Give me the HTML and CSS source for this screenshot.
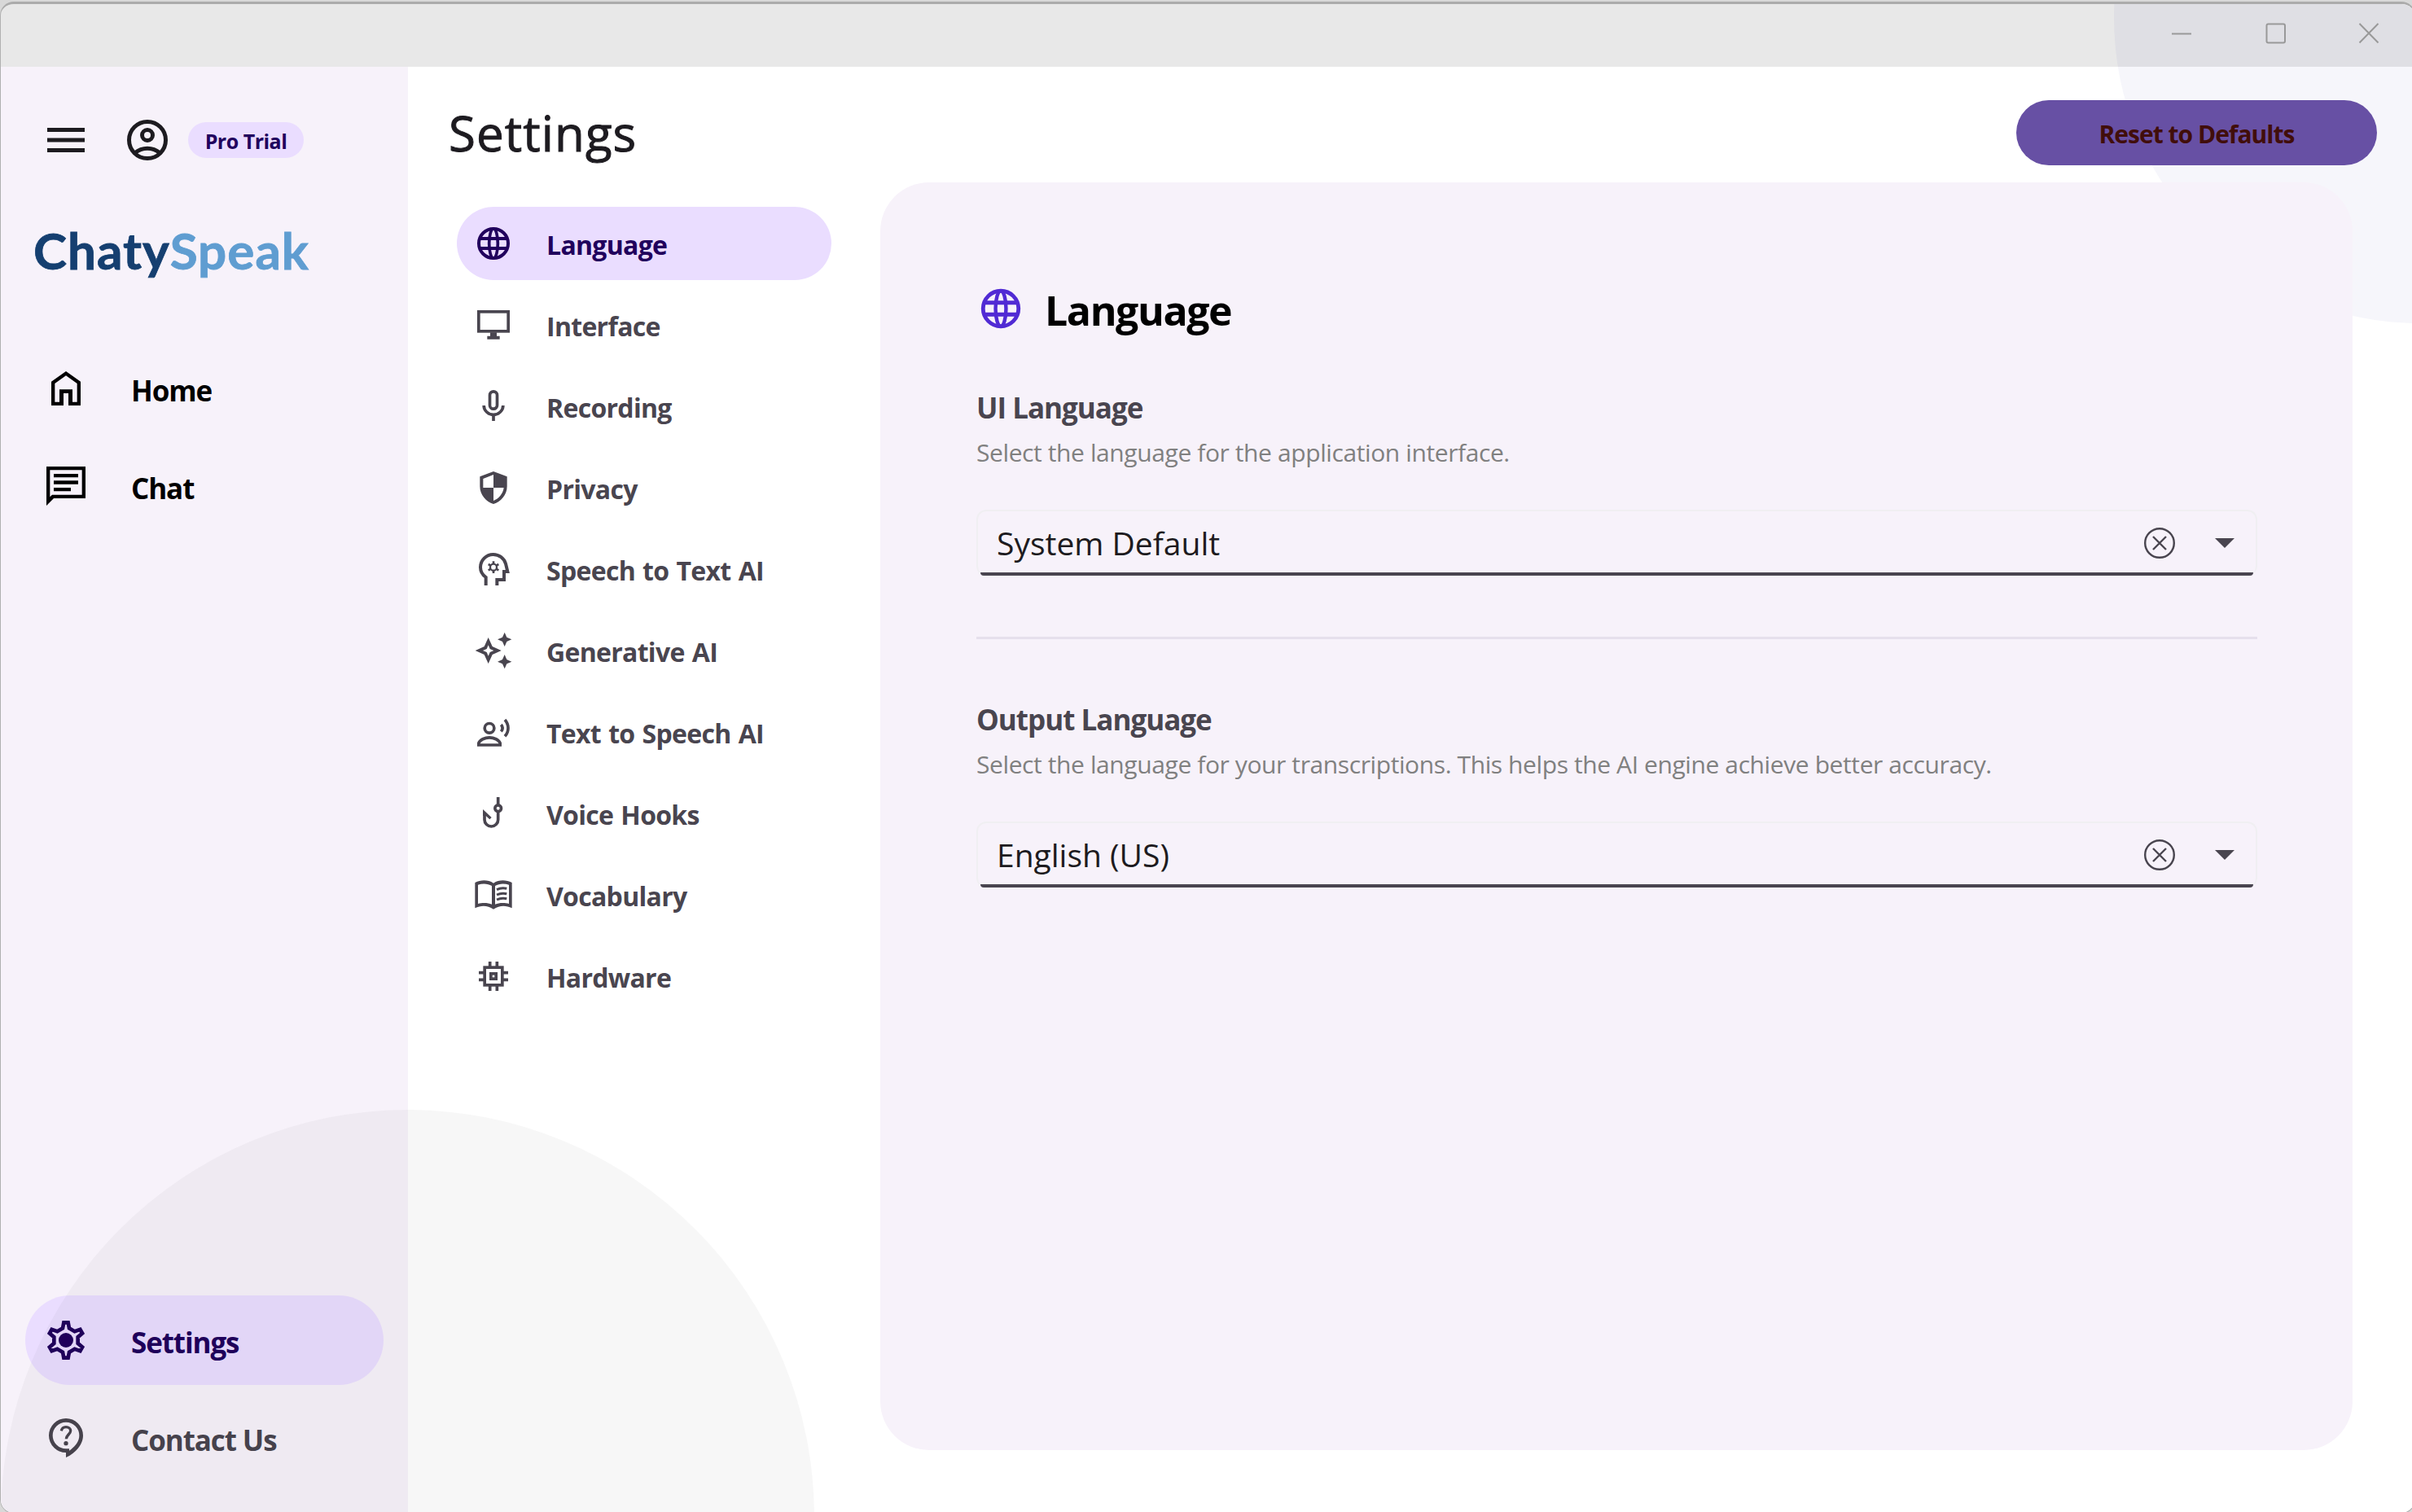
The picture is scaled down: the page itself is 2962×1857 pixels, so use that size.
FILE: index.html
```html
<!DOCTYPE html>
<html lang="en">
<head>
  <meta charset="UTF-8" />
  <title>ChatySpeak - Settings</title>
  <link rel="stylesheet" href="styles.css">
</head>
<body>
  <div class="window">
    <div class="circle-top"></div>

    <div class="titlebar">
      <svg class="win-btn" viewBox="0 0 26 26"><path d="M1 13.5H25" /></svg>
      <svg class="win-btn" viewBox="0 0 26 26"><rect x="2.5" y="1.5" width="22.5" height="23" rx="2" /></svg>
      <svg class="win-btn" viewBox="0 0 26 26"><path d="M1.5 1L24.5 24.5M24.5 1L1.5 24.5" /></svg>
    </div>

    <div class="layout">
      <aside class="sidebar">
        <div class="account">
          <svg class="menu-icon" viewBox="0 0 60 60"><path d="M7 15H53V20H7ZM7 27.5H53V32.5H7ZM7 40H53V45H7Z" /></svg>
          <svg class="user-icon" viewBox="0 0 150 150">
            <circle cx="75" cy="75" r="67.5" />
            <circle cx="75" cy="57" r="19.5" />
            <path d="M30 122C55 100 95 100 120 122" />
          </svg>
          <span class="plan">Pro Trial</span>
        </div>

        <div class="logo">Chaty<span>Speak</span></div>

        <nav class="side-nav">
          <a class="side-item">
            <svg class="icon" viewBox="-72 -72 144 144"><path fill-rule="evenodd" d="M-54 63V-25L0 -63L54 -25V63H9V18H-9V63ZM-41 50H-24V4H24V50H41V-18L0 -47L-41 -18Z" /></svg>
            <span>Home</span>
          </a>
          <a class="side-item">
            <svg class="icon" viewBox="0 0 144 144"><path fill-rule="evenodd" d="M0 0H144V117H27L0 144ZM13 13V112L21 104H131V13ZM27 27H117V40H27ZM27 52H117V65H27ZM27 78H90V91H27Z" /></svg>
            <span>Chat</span>
          </a>
        </nav>

        <nav class="side-nav bottom">
          <a class="side-item active">
            <svg class="icon" viewBox="-72 -72 144 144">
              <path class="line" stroke-width="14" d="M-8 -65H8L12 -44L32 -32.4L52.3 -39.4L60.3 -25.6L44 -11.6V11.6L60.3 25.6L52.3 39.4L32 32.4L12 44L8 65H-8L-12 44L-32 32.4L-52.3 39.4L-60.3 25.6L-44 11.6V-11.6L-60.3 -25.6L-52.3 -39.4L-32 -32.4L-12 -44Z" />
              <circle r="27" />
            </svg>
            <span>Settings</span>
          </a>
          <a class="side-item muted">
            <svg class="icon" viewBox="-9 0 144 144">
              <path fill-rule="evenodd" d="M63 0A63 63 0 0 0 63 126V144C100 128 126 95 126 63A63 63 0 0 0 63 0ZM63 14A49 49 0 0 1 112 63C112 87 95 105 75 119V112H63A49 49 0 0 1 63 14Z" />
              <path class="line" stroke-width="10" d="M46 46C48 36 54 32 63 32C73 32 80 38 80 46C80 58 64 61 64 76" />
              <circle cx="63" cy="92" r="8" />
            </svg>
            <span>Contact Us</span>
          </a>
        </nav>
      </aside>

      <main class="main">
        <header class="header">
          <h1>Settings</h1>
          <button class="reset">Reset to Defaults</button>
        </header>

        <div class="content">
          <nav class="tabs">
            <a class="tab active">
              <svg class="icon" viewBox="-72 -72 144 144">
                <g class="line" stroke-width="12"><circle r="54" /><ellipse rx="16" ry="54" stroke-width="11" /><path d="M-53 -18H53M-53 18H53" /></g>
              </svg>
              <span>Language</span>
            </a>
            <a class="tab">
              <svg class="icon" viewBox="-72 -72 144 144">
                <rect class="line" stroke-width="11" x="-54.5" y="-48.5" width="109" height="72" />
                <path d="M-12 28H12V41H23V53H-23V41H-12Z" />
              </svg>
              <span>Interface</span>
            </a>
            <a class="tab">
              <svg class="icon" viewBox="-72 -72 144 144">
                <g class="line" stroke-width="11"><rect x="-13.5" y="-54.5" width="27" height="64" rx="13.5" /><path d="M-35.5 -3A35.5 34 0 0 0 35.5 -3" /><path d="M0 32V54" /></g>
              </svg>
              <span>Recording</span>
            </a>
            <a class="tab">
              <svg class="icon" viewBox="-72 -72 144 144">
                <path fill-rule="evenodd" d="M0 -60L50 -41V-5C50 27 27 52 0 60C-27 52 -50 27 -50 -5V-41ZM0 -48V0H-38V-33ZM0 0H38C35 22 20 40 0 48Z" />
              </svg>
              <span>Privacy</span>
            </a>
            <a class="tab">
              <svg class="icon" viewBox="-72 -72 144 144">
                <path class="line" stroke-width="12" d="M-28 60V30C-40 21 -48 8 -48 -7A47 47 0 0 1 -1 -54C21 -54 39 -40 45 -20L52 9H39V39H13V60" />
                <circle class="line" stroke-width="7" cy="-7" r="12" />
                <path class="line" stroke-width="8" d="M0 -29V-18M0 4V15M-19 -18L-10 -13M19 -18L10 -13M-19 4L-10 -1M19 4L10 -1" />
              </svg>
              <span>Speech to Text AI</span>
            </a>
            <a class="tab">
              <svg class="icon" viewBox="-72 -72 144 144">
                <path fill-rule="evenodd" d="M-19 -48L-4 -15L29 0L-4 15L-19 48L-34 15L-67 0L-34 -15ZM-19 -20L-25 -6L-39 0L-25 6L-19 20L-13 6L1 0L-13 -6Z" />
                <path d="M41 -67L49 -49L67 -41L49 -33L41 -15L33 -33L15 -41L33 -49ZM41 15L49 33L67 41L49 49L41 67L33 49L15 41L33 33Z" />
              </svg>
              <span>Generative AI</span>
            </a>
            <a class="tab">
              <svg class="icon" viewBox="-72 -72 144 144">
                <g class="line" stroke-width="11"><circle cx="-15" cy="-14" r="17.5" /><path d="M-54.5 48V41C-50 29 -32 20.5 -15 20.5C2 20.5 20 29 24.5 41V48Z" /><path d="M42 -45C58 -27 58 -2 42 16" /><path d="M28 -27C35 -19 35 -10 28 -2" /></g>
              </svg>
              <span>Text to Speech AI</span>
            </a>
            <a class="tab">
              <svg class="icon" viewBox="-72 -72 144 144">
                <g class="line" stroke-width="11"><path d="M17 -60V-32M17 -6V23A25 25 0 0 1 -33 23V5" /><circle cx="17" cy="-19" r="11.5" /></g>
                <path d="M-39 -15L-7 15L-14 22L-28 9H-39Z" />
              </svg>
              <span>Voice Hooks</span>
            </a>
            <a class="tab">
              <svg class="icon" viewBox="-72 -72 144 144">
                <path fill-rule="evenodd" d="M0 -43C-20 -56 -46 -56 -68 -45V49C-46 38 -22 38 0 53C22 38 46 38 68 49V-45C46 -56 20 -56 0 -43ZM-57 -37C-40 -43 -20 -42 -6 -33V35C-20 29 -42 29 -57 33ZM57 -37C40 -43 20 -42 6 -33V35C20 29 42 29 57 33Z" />
                <path class="line" stroke-width="9" d="M12 -19C24 -25 36 -26 49 -23M12 0C24 -6 36 -7 49 -4M12 18C24 12 36 11 49 14" />
              </svg>
              <span>Vocabulary</span>
            </a>
            <a class="tab">
              <svg class="icon" viewBox="-72 -72 144 144">
                <g class="line" stroke-width="11"><rect x="-32.5" y="-32.5" width="65" height="65" /><rect x="-9.5" y="-9.5" width="19" height="19" /><path d="M-13 -54V-35M13 -54V-35M-13 54V35M13 54V35M-54 -13H-35M-54 13H-35M54 -13H35M54 13H35" /></g>
              </svg>
              <span>Hardware</span>
            </a>
          </nav>

          <section class="panel">
            <h2>
              <svg class="heading-icon" viewBox="-72 -72 144 144">
                <g class="line" stroke-width="12"><circle r="54" /><ellipse rx="16" ry="54" stroke-width="11" /><path d="M-53 -18H53M-53 18H53" /></g>
              </svg>
              Language
            </h2>

            <h3>UI Language</h3>
            <p>Select the language for the application interface.</p>
            <div class="select">
              <span class="value">System Default</span>
              <svg class="clear" viewBox="0 0 38 38"><circle cx="19" cy="19" r="17.8" /><path d="M11 11L27 27M27 11L11 27" /></svg>
              <svg class="arrow" viewBox="0 0 24 12"><path d="M0 0H24L12 12Z" /></svg>
            </div>

            <div class="divider"></div>

            <h3>Output Language</h3>
            <p>Select the language for your transcriptions. This helps the AI engine achieve better accuracy.</p>
            <div class="select">
              <span class="value">English (US)</span>
              <svg class="clear" viewBox="0 0 38 38"><circle cx="19" cy="19" r="17.8" /><path d="M11 11L27 27M27 11L11 27" /></svg>
              <svg class="arrow" viewBox="0 0 24 12"><path d="M0 0H24L12 12Z" /></svg>
            </div>
          </section>
        </div>
      </main>
    </div>

    <div class="circle-bottom"></div>
  </div>
</body>
</html>
```
FILE: styles.css
```css
* {
  box-sizing: border-box;
}

body {
  margin: 0;
  padding-top: 2px;
  height: 100vh;
  overflow: hidden;
  background: #d8d8d8;
  font-family: "Open Sans", "Noto Sans", sans-serif;
  color: #1d1b20;
}

.window {
  position: relative;
  width: calc(100% + 4px);
  height: 1857px;
  overflow: hidden;
  display: flex;
  flex-direction: column;
  background: white;
  border: 1px solid #b0b0b0;
  border-top: 3px solid #ababab;
  border-radius: 17px;
}

/* Decorative circles */
.circle-top {
  position: absolute;
  top: -358px;
  left: 2595px;
  width: 750px;
  height: 750px;
  border-radius: 50%;
  background: #f6f6fb;
}

.circle-bottom {
  position: absolute;
  top: 1358px;
  left: 0;
  width: 999px;
  height: 1000px;
  border-radius: 50%;
  background: rgba(0, 0, 0, 0.03);
}

.titlebar {
  position: relative;
  flex: none;
  height: 77px;
  padding: 0 43px 5px 0;
  display: flex;
  justify-content: flex-end;
  align-items: center;
  gap: 89px;
  background: rgba(0, 0, 0, 0.09);
}

.win-btn {
  width: 26px;
  height: 26px;
  fill: none;
  stroke: #999;
  stroke-width: 2;
}

.layout {
  position: relative;
  flex: 1;
  display: flex;
}

/* Sidebar */
.sidebar {
  width: 500px;
  flex: none;
  display: flex;
  flex-direction: column;
  padding: 60px 30px 37px;
  background: #f7f2fa;
}

.account {
  display: flex;
  align-items: center;
  height: 60px;
  padding-left: 20px;
}

.menu-icon {
  width: 60px;
  height: 60px;
  fill: #1d1b20;
}

.user-icon {
  width: 50px;
  height: 50px;
  margin: 0 25px 0 45px;
  fill: none;
  stroke: #1d1b20;
  stroke-width: 15;
}

.plan {
  width: 142px;
  height: 44px;
  line-height: 46px;
  border-radius: 22px;
  background: #eaddff;
  color: #21005d;
  font-size: 25px;
  font-weight: bold;
  text-align: center;
  letter-spacing: -0.5px;
}

.logo {
  margin: 65px 0 75px 10px;
  font-family: Lato, sans-serif;
  font-size: 62px;
  font-weight: bold;
  line-height: 80px;
  letter-spacing: 1px;
  -webkit-text-stroke: 0.8px;
  color: #153f70;
}

.logo span {
  color: #5f9dd1;
}

.side-nav {
  display: flex;
  flex-direction: column;
  gap: 10px;
}

.side-nav.bottom {
  margin-top: auto;
}

.side-item {
  display: flex;
  align-items: center;
  gap: 56px;
  height: 110px;
  padding-left: 26px;
  border-radius: 55px;
  font-size: 35px;
  font-weight: bold;
  letter-spacing: -1.1px;
  color: black;
}

.side-item span {
  padding-top: 4px;
}

.tab span {
  padding-top: 3px;
}

.side-item.muted {
  color: #49454f;
}

.active,
.side-item.active {
  background: #eaddff;
  color: #21005d;
}

.icon {
  width: 48px;
  height: 48px;
  flex: none;
  fill: currentColor;
}

.line {
  fill: none;
  stroke: currentColor;
}

/* Main */
.main {
  flex: 1;
  display: flex;
  flex-direction: column;
  padding: 41px 46px 77px 50px;
}

.header {
  display: flex;
  justify-content: space-between;
  height: 80px;
}

h1 {
  margin: 0;
  font-size: 60px;
  font-weight: 500;
  line-height: 80px;
  letter-spacing: 1.1px;
  -webkit-text-stroke: 1px;
}

.reset {
  width: 443px;
  height: 80px;
  padding: 2px 0 0;
  border: none;
  border-radius: 40px;
  background: #6750a4;
  color: #410e0b;
  font-family: inherit;
  font-size: 30px;
  font-weight: bold;
  letter-spacing: -1px;
}

.content {
  flex: 1;
  display: flex;
  gap: 60px;
  margin: 21px 30px 0 10px;
}

.tabs {
  width: 460px;
  flex: none;
  display: flex;
  flex-direction: column;
  gap: 10px;
  padding-top: 30px;
}

.tab {
  display: flex;
  align-items: center;
  gap: 41px;
  height: 90px;
  padding-left: 21px;
  border-radius: 45px;
  font-size: 32px;
  font-weight: bold;
  letter-spacing: -0.7px;
  word-spacing: 1.5px;
  color: #49454f;
}

.tab.active {
  color: #21005d;
}

.panel {
  flex: 1;
  padding: 127px 117px 0 118px;
  border-radius: 60px;
  background: #f7f2fa;
}

h2 {
  display: flex;
  align-items: center;
  gap: 25px;
  height: 60px;
  margin: 0 0 66px 1px;
  font-size: 50px;
  line-height: 60px;
  letter-spacing: -1.4px;
  color: black;
}

.heading-icon {
  width: 58px;
  height: 58px;
  margin-top: -5px;
  color: #512bd4;
}

h3 {
  margin: 0 0 10px;
  font-size: 35px;
  line-height: 48px;
  letter-spacing: -1px;
  color: #49454f;
}

p {
  margin: 0 0 49px;
  font-size: 30px;
  line-height: 42px;
  letter-spacing: -0.4px;
  color: #808080;
}

.select {
  position: relative;
  display: flex;
  align-items: center;
  height: 81px;
  padding: 0 26px 2px 23px;
  border: 2px solid #f0eff2;
  border-bottom: none;
  border-radius: 12px;
}

.select::after {
  content: "";
  position: absolute;
  left: 3px;
  right: 3px;
  bottom: 0;
  height: 4px;
  border-radius: 0 0 6px 6px;
  background: #49454f;
}

.value {
  flex: 1;
  font-size: 39px;
}

.clear {
  width: 38px;
  height: 38px;
  margin-right: 49px;
  fill: none;
  stroke: #49454f;
  stroke-width: 2.4;
}

.arrow {
  width: 24px;
  height: 12px;
  fill: #49454f;
}

.divider {
  height: 3px;
  margin: 75px 0;
  background: #e6e0ec;
}
```
